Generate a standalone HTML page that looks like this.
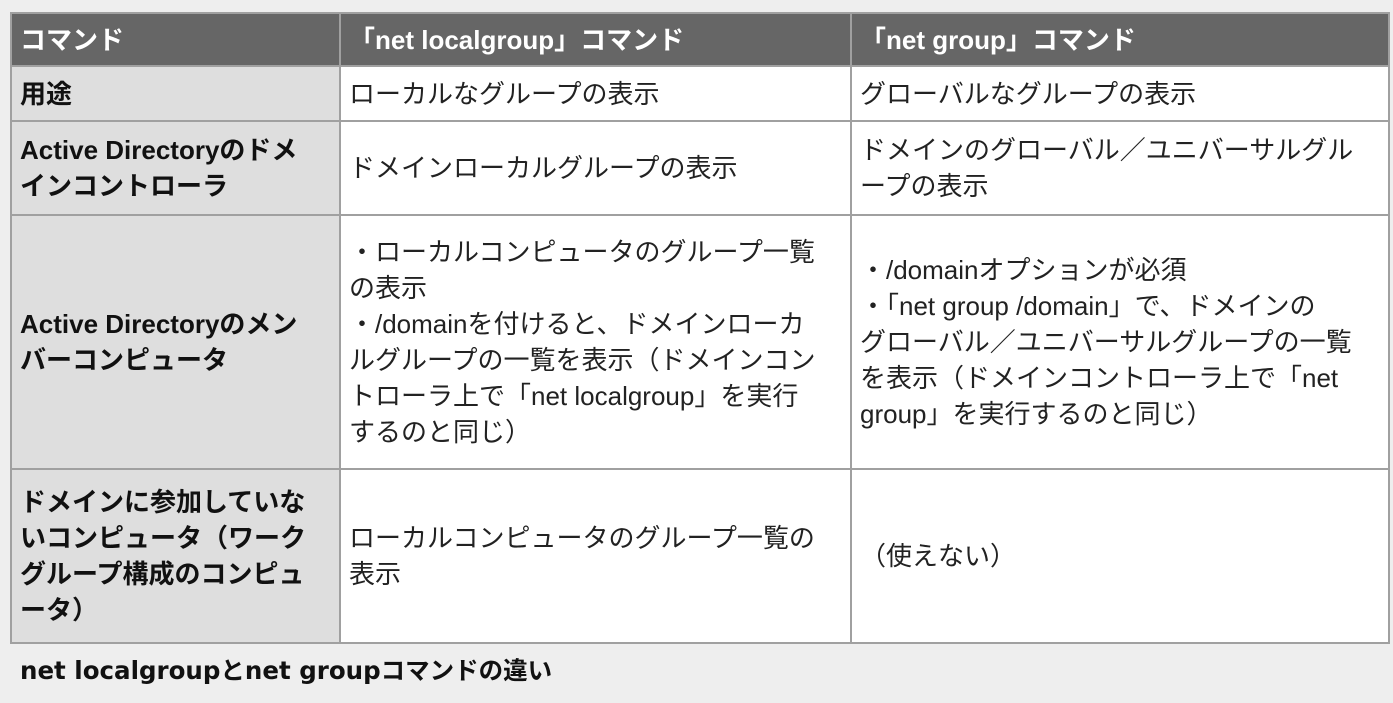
<!DOCTYPE html>
<html><head><meta charset="utf-8"><style>
body{margin:0;background:#eeeeee;width:1393px;height:703px;overflow:hidden;font-family:"Liberation Sans","Noto Sans CJK JP",sans-serif;}
table{position:absolute;left:10px;top:12px;border-collapse:collapse;width:1378px;table-layout:fixed;}
td,th{border:2px solid #a0a0a0;padding:0 0 0 8px;font-size:26px;line-height:36px;color:#222;text-align:left;vertical-align:middle;white-space:nowrap;overflow:hidden;}
th{background:#666;color:#fff;font-weight:bold;height:51px;}
td.h{background:#dedede;font-weight:bold;color:#111;}
td{background:#fff;}
.cap{position:absolute;left:20px;top:653px;font-family:"DejaVu Sans","Noto Sans CJK JP",sans-serif;font-size:24.5px;font-weight:bold;color:#111;line-height:36px;}
</style></head><body>
<table>
<colgroup><col style="width:329px"><col style="width:511px"><col style="width:538px"></colgroup>
<tr><th>コマンド</th><th>「net localgroup」コマンド</th><th>「net group」コマンド</th></tr>
<tr style="height:55px"><td class="h">用途</td><td>ローカルなグループの表示</td><td>グローバルなグループの表示</td></tr>
<tr style="height:94px"><td class="h">Active Directoryのドメ<br>インコントローラ</td><td>ドメインローカルグループの表示</td><td>ドメインのグローバル／ユニバーサルグル<br>ープの表示</td></tr>
<tr style="height:254px"><td class="h">Active Directoryのメン<br>バーコンピュータ</td><td>・ローカルコンピュータのグループ一覧<br>の表示<br>・/domainを付けると、ドメインローカ<br>ルグループの一覧を表示（ドメインコン<br>トローラ上で「net localgroup」を実行<br>するのと同じ）</td><td>・/domainオプションが必須<br>・「net group /domain」で、ドメインの<br>グローバル／ユニバーサルグループの一覧<br>を表示（ドメインコントローラ上で「net<br>group」を実行するのと同じ）</td></tr>
<tr style="height:174px"><td class="h">ドメインに参加していな<br>いコンピュータ（ワーク<br>グループ構成のコンピュ<br>ータ）</td><td>ローカルコンピュータのグループ一覧の<br>表示</td><td>（使えない）</td></tr>
</table>
<div class="cap">net localgroupとnet groupコマンドの違い</div>
</body></html>
